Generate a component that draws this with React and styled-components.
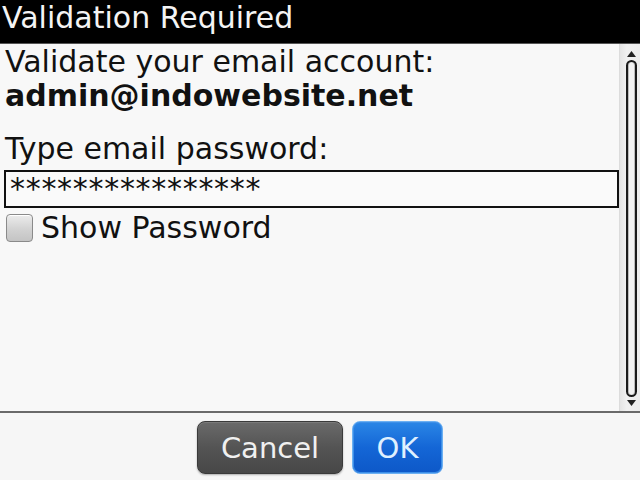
import styled, { createGlobalStyle } from 'styled-components';

const GlobalStyle = createGlobalStyle`
  html, body {
    margin: 0;
    padding: 0;
    background: #f8f8f8;
  }
  * {
    box-sizing: border-box;
  }
`;

const Screen = styled.div`
  width: 640px;
  height: 480px;
  display: flex;
  flex-direction: column;
  font-family: "DejaVu Sans", "Liberation Sans", sans-serif;
  background: #f8f8f8;
  overflow: hidden;
`;

const TitleBar = styled.div`
  height: 44px;
  flex: none;
  background: #000;
  color: #f4f4f4;
  font-size: 30px;
  line-height: 36px;
  padding: 0 0 0 2px;
  border-bottom: 1px solid #555;
`;

const Body = styled.div`
  flex: 1;
  display: flex;
  min-height: 0;
`;

const Content = styled.div`
  flex: 1;
  padding: 1px 0 0 4px;
  color: #111;
  font-size: 30px;
  line-height: 34px;
`;

const Line = styled.div`
  margin-top: ${p => p.$gap || 0}px;
  font-weight: ${p => (p.$bold ? 700 : 400)};
  padding-left: 1px;
`;

const Field = styled.div`
  margin-top: 4px;
  width: 615px;
  height: 38px;
  border: 2px solid #111;
  background: #fafafa;
  padding: 0 4px;
  line-height: 34px;
  letter-spacing: 0.7px;
`;

const CheckRow = styled.label`
  margin-top: 3px;
  display: flex;
  align-items: center;
  gap: 8px;
  padding-left: 2px;
  height: 34px;
`;

const Box = styled.span`
  width: 27px;
  height: 28px;
  border-radius: 4px;
  border: 1px solid #8a8a8a;
  background: linear-gradient(#ececec, #d2d2d2 55%, #c4c4c4);
  box-shadow: inset 0 1px 0 #fff;
`;

const ScrollColumn = styled.div`
  width: 23px;
  flex: none;
  display: flex;
  flex-direction: column;
  align-items: center;
  padding: 7px 0 5px;
  gap: 3px;
  background: linear-gradient(90deg, #e4e4e4, #f0f0f0 30%, #ececec);
  border-left: 1px solid #dcdcdc;
`;

const Track = styled.div`
  flex: 1;
  width: 11px;
  border: 2px solid #1a1a1a;
  border-radius: 6px;
  background: #f2f2f2;
  box-shadow: inset 1px 0 0 #bbb, inset -1px 0 0 #bbb;
`;

const Separator = styled.div`
  height: 2px;
  flex: none;
  background: #6a6a6a;
`;

const ButtonBar = styled.div`
  height: 67px;
  flex: none;
  display: flex;
  justify-content: center;
  align-items: center;
  gap: 9px;
  padding-top: 2px;
  background: #f6f6f6;
`;

const Button = styled.button`
  height: 53px;
  width: ${p => p.$width}px;
  border-radius: 8px;
  font-family: "DejaVu Sans", "Liberation Sans", sans-serif;
  font-size: 29px;
  padding: 0;
  color: ${p => (p.$primary ? '#dff0ff' : '#f0f0f0')};
  border: 1px solid ${p => (p.$primary ? '#6cb0f2' : '#3a3a3a')};
  background: ${p =>
    p.$primary
      ? 'linear-gradient(#2a86e6, #1466d6 50%, #0d58c8)'
      : 'linear-gradient(#6a6a6a, #545454 50%, #474747)'};
  box-shadow: ${p =>
    p.$primary ? 'inset 0 0 0 1px #3d8fe8' : 'inset 0 1px 0 #7a7a7a, 0 1px 2px rgba(0,0,0,0.3)'};
`;

const Arrow = ({ up }) => (
  <svg width="9" height="6" viewBox="0 0 9 6">
    <path d={up ? 'M0 6 L4.5 0 L9 6 Z' : 'M0 0 L4.5 6 L9 0 Z'} fill="#222" />
  </svg>
);

export default function App() {
  return (
    <>
      <GlobalStyle />
      <Screen>
        <TitleBar>Validation Required</TitleBar>
        <Body>
          <Content>
            <Line>Validate your email account:</Line>
            <Line $bold>admin@indowebsite.net</Line>
            <Line $gap={19}>Type email password:</Line>
            <Field>****************</Field>
            <CheckRow>
              <Box />
              Show Password
            </CheckRow>
          </Content>
          <ScrollColumn>
            <Arrow up />
            <Track />
            <Arrow />
          </ScrollColumn>
        </Body>
        <Separator />
        <ButtonBar>
          <Button $width={146}>Cancel</Button>
          <Button $width={91} $primary>OK</Button>
        </ButtonBar>
      </Screen>
    </>
  );
}
